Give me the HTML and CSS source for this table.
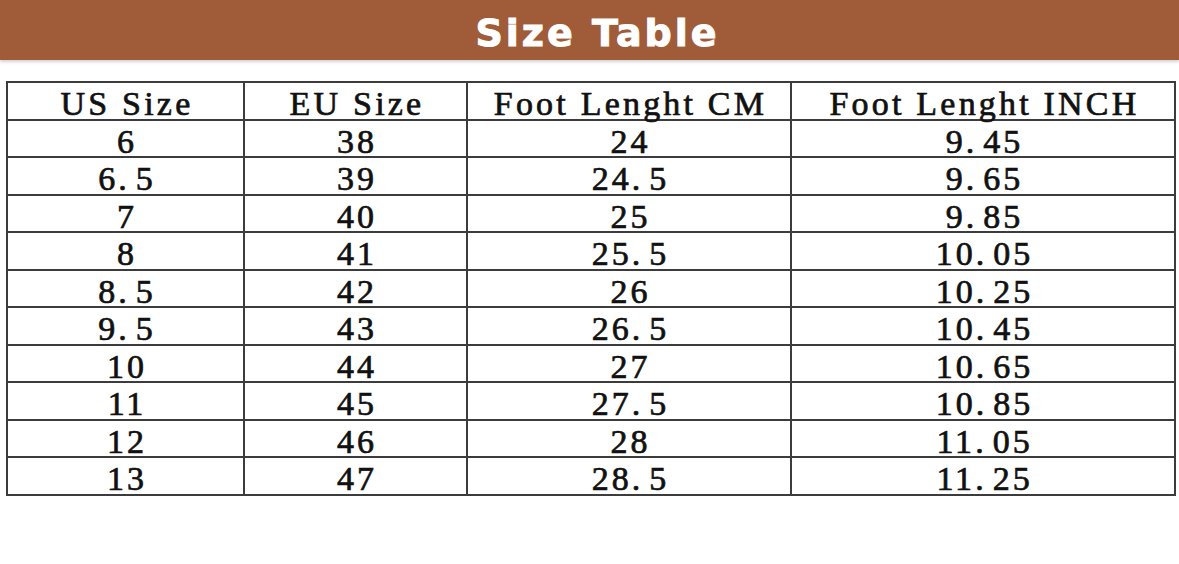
FILE: index.html
```html
<!DOCTYPE html>
<html>
<head>
<meta charset="utf-8">
<link rel="stylesheet" href="styles.css">
</head>
<body>
<header class="banner"><h1 class="banner-title">Size Table</h1></header>
<main class="content">
<table class="size-table">
<colgroup>
<col class="c1"><col class="c2"><col class="c3"><col class="c4">
</colgroup>
<thead>
<tr><th>US Size</th><th>EU Size</th><th>Foot Lenght CM</th><th>Foot Lenght INCH</th></tr>
</thead>
<tbody>
<tr><td>6</td><td>38</td><td>24</td><td>9<span class="pt">.</span>45</td></tr>
<tr><td>6<span class="pt">.</span>5</td><td>39</td><td>24<span class="pt">.</span>5</td><td>9<span class="pt">.</span>65</td></tr>
<tr><td>7</td><td>40</td><td>25</td><td>9<span class="pt">.</span>85</td></tr>
<tr><td>8</td><td>41</td><td>25<span class="pt">.</span>5</td><td>10<span class="pt">.</span>05</td></tr>
<tr><td>8<span class="pt">.</span>5</td><td>42</td><td>26</td><td>10<span class="pt">.</span>25</td></tr>
<tr><td>9<span class="pt">.</span>5</td><td>43</td><td>26<span class="pt">.</span>5</td><td>10<span class="pt">.</span>45</td></tr>
<tr><td>10</td><td>44</td><td>27</td><td>10<span class="pt">.</span>65</td></tr>
<tr><td>11</td><td>45</td><td>27<span class="pt">.</span>5</td><td>10<span class="pt">.</span>85</td></tr>
<tr><td>12</td><td>46</td><td>28</td><td>11<span class="pt">.</span>05</td></tr>
<tr><td>13</td><td>47</td><td>28<span class="pt">.</span>5</td><td>11<span class="pt">.</span>25</td></tr>
</tbody>
</table>
</main>
</body>
</html>
```
FILE: styles.css
```css
html, body {
  margin: 0;
  padding: 0;
  background: #ffffff;
}

.banner {
  height: 60px;
  box-sizing: border-box;
  padding-top: 5px;
  background: #a05c38;
  display: flex;
  align-items: center;
  justify-content: center;
  box-shadow: 0 2px 3px rgba(0, 0, 0, 0.18);
}

.banner-title {
  margin: 0;
  padding-left: 16px;
  font-family: "DejaVu Sans", sans-serif;
  font-weight: bold;
  font-size: 38px;
  letter-spacing: 3px;
  color: #ffffff;
  -webkit-text-stroke: 1px #ffffff;
  line-height: 1;
}

.content {
  padding: 21px 5px 0 6px;
}

.size-table {
  border-collapse: collapse;
  table-layout: fixed;
  width: 1168px;
  font-family: "Liberation Serif", "Times New Roman", serif;
  font-size: 34px;
  letter-spacing: 3px;
  color: #111111;
  -webkit-text-stroke: 0.7px #111111;
}

.c1 { width: 237px; }
.c2 { width: 223px; }
.c3 { width: 324px; }
.c4 { width: 384px; }

.size-table th,
.size-table td {
  border: 2px solid #3c3c3c;
  height: 37.5px;
  padding: 7px 0 0 3px;
  box-sizing: border-box;
  text-align: center;
  vertical-align: middle;
  font-weight: normal;
  line-height: 28px;
  white-space: nowrap;
}

.size-table th {
  letter-spacing: 3.2px;
}

.pt {
  margin-right: 6px;
}
```
